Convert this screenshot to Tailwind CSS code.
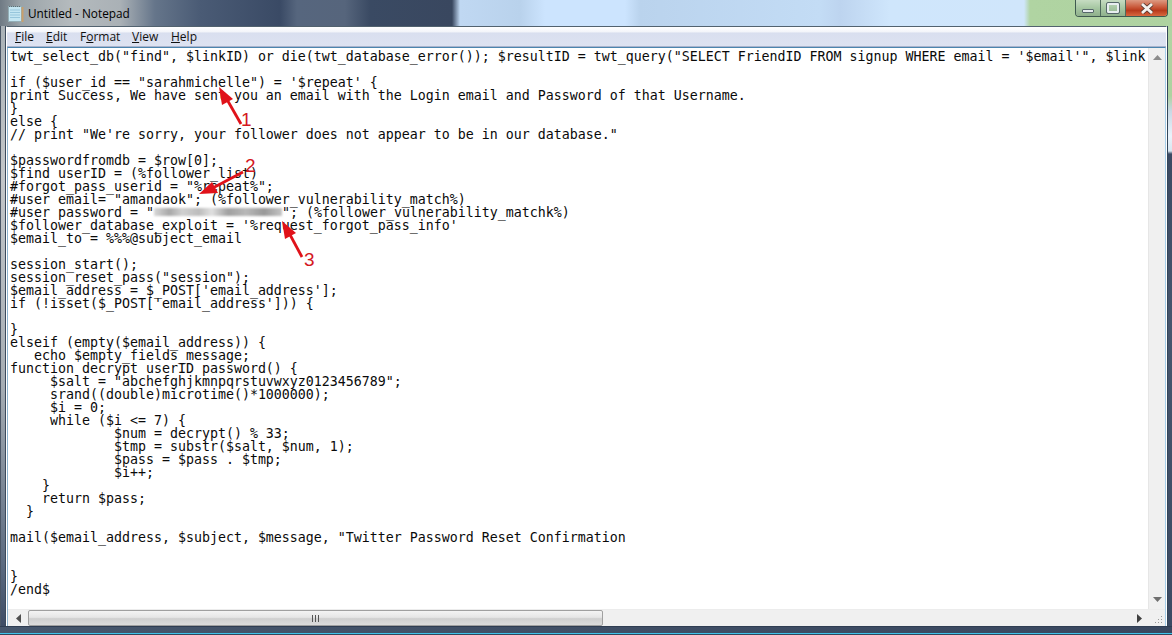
<!DOCTYPE html>
<html>
<head>
<meta charset="utf-8">
<title>Untitled - Notepad</title>
<script src="https://cdn.jsdelivr.net/npm/@tailwindcss/browser@4"></script>
</head>
<body class="m-0 overflow-hidden bg-[#39475f]">
<div class="relative w-[1172px] h-[635px] overflow-hidden flex flex-col font-['Open_Sans',sans-serif]">

  <!-- title bar -->
  <div class="relative h-[26px] shrink-0 flex items-center pl-[8px] bg-[linear-gradient(90deg,#6f7a84_0px,#9aa3a8_20px,#b4babd_70px,#aab1b6_120px,#65758a_155px,#4a5b75_200px,#3a4a65_280px,#56667e_297px,#56657c_345px,#3a4a63_370px,#39475f_452px,#c0d8f2_460px,#b9d2ec_520px,#cce4fe_545px,#cce4fe_625px,#bad3ed_640px,#c3dcf5_820px,#bdd4ef_840px,#cfe6fc_890px,#d0e6fb_1024px,#b0d4a2_1030px,#aed2a0_1172px)]">
    <svg width="16" height="17" viewBox="0 0 16 17" class="shrink-0 mt-[1px]">
      <rect x="0.5" y="1.5" width="13" height="15" fill="#c4e6f2" stroke="#93aeb6"/>
      <rect x="13.5" y="2" width="2" height="15" fill="#c9a06c"/>
      <path d="M1 1.5h12" stroke="#5d6d73" stroke-dasharray="1 1"/>
      <path d="M2 5h10M2 7.5h10M2 10h10M2 12.5h10" stroke="#97c6dc"/>
    </svg>
    <span class="ml-[4px] text-[11.8px] leading-[16px] text-black">Untitled - Notepad</span>

    <!-- caption buttons -->
    <div class="absolute left-[1075px] top-0 w-[93px] h-[17px] flex border border-t-0 border-[#3f5a50] rounded-b-[4px] overflow-hidden">
      <div class="w-[25px] flex items-center justify-center border-r border-[#4f6a5c] bg-[linear-gradient(180deg,#c6dcc2,#a6c7a2_50%,#8fb08c)]">
        <div class="w-[12px] h-[4px] mt-[5px] bg-[#e8eef0] border border-[#56686a] rounded-[1px]"></div>
      </div>
      <div class="w-[25px] flex items-center justify-center border-r border-[#4f6a5c] bg-[linear-gradient(180deg,#c6dcc2,#a6c7a2_50%,#8fb08c)]">
        <div class="w-[12px] h-[10px] border-2 border-[#e8eef0] outline outline-1 outline-[#56686a] rounded-[1px]"></div>
      </div>
      <div class="flex-1 flex items-center justify-center bg-[linear-gradient(180deg,#dd9a82,#c9583a_45%,#b83a1c_65%,#d8683f)]">
        <svg width="14" height="11" viewBox="0 0 14 11"><path d="M2 1l10 9M12 1L2 10" stroke="#5a3a30" stroke-width="4.4"/><path d="M2 1l10 9M12 1L2 10" stroke="#f4f1ee" stroke-width="2.8"/></svg>
      </div>
    </div>
  </div>

  <!-- middle -->
  <div class="flex-1 min-h-0 flex">
    <div class="w-[6px] shrink-0 border-l border-[#4a5666] border-r border-r-[#3c4a5c] bg-[linear-gradient(180deg,#a9b1b6,#c2c6c9_25%,#a5adb4_60%,#5a6a80_90%,#3e4d66)]"></div>

    <div class="flex-1 min-w-0 flex flex-col bg-white border-t border-t-[#52626f] border-l border-l-white border-r border-r-white">
      <!-- menu -->
      <div class="h-[20px] shrink-0 flex items-center pl-[8px] text-[12px] text-[#111] border-b border-[#a9b3cc] bg-[linear-gradient(180deg,#ffffff,#f3f5fa_25%,#d9dfef_32%,#dde2f1)]">
        <span class="w-[31px]"><u>F</u>ile</span>
        <span class="w-[34px]"><u>E</u>dit</span>
        <span class="w-[52px]">F<u>o</u>rmat</span>
        <span class="w-[39px]"><u>V</u>iew</span>
        <span><u>H</u>elp</span>
      </div>

      <!-- editor -->
      <div class="flex-1 min-h-0 flex flex-col border-t border-t-[#4b84ae] border-r border-r-[#a9d0ea] border-l border-l-[#8fb4cf]">
        <div class="flex-1 min-h-0 flex">
          <pre class="flex-1 min-w-0 overflow-hidden m-0 pl-[2px] pt-[2px] font-['DejaVu_Sans_Mono',monospace] text-[13.29px] leading-[13px] text-[#0a0a0a] whitespace-pre">twt_select_db("find", $linkID) or die(twt_database_error()); $resultID = twt_query("SELECT FriendID FROM signup WHERE email = '$email'", $link

if ($user_id == "sarahmichelle") = '$repeat' {
print Success, We have sent you an email with the Login email and Password of that Username.
}
else {
// print "We're sorry, your follower does not appear to be in our database."

$passwordfromdb = $row[0];
$find userID = (%follower_list)
#forgot_pass_userid = "%repeat%";
#user email= "amandaok"; (%follower_vulnerability_match%)
#user password = "<span class="inline-block w-[128px] h-[8px] align-[1px] blur-[1.2px] bg-[linear-gradient(90deg,#d8d8d8,#a8a8a8_12%,#d0d0d0_22%,#bcbcbc_35%,#e0e0e0_45%,#a0a0a0_58%,#b8b8b8_72%,#989898_86%,#c4c4c4)]"></span>"; (%follower_vulnerability_matchk%)
$follower_database_exploit = '%request_forgot_pass_info'
$email_to = %%%@subject_email

session_start();
session_reset_pass("session");
$email_address = $_POST['email_address'];
if (!isset($_POST['email_address'])) {

}
elseif (empty($email_address)) {
   echo $empty_fields_message;
function decrypt userID password() {
     $salt = "abchefghjkmnpqrstuvwxyz0123456789";
     srand((double)microtime()*1000000);
     $i = 0;
     while ($i &lt;= 7) {
             $num = decrypt() % 33;
             $tmp = substr($salt, $num, 1);
             $pass = $pass . $tmp;
             $i++;
    }
    return $pass;
  }

mail($email_address, $subject, $message, "Twitter Password Reset Confirmation


}
/end$</pre>
          <!-- vertical scrollbar -->
          <div class="w-[17px] shrink-0 flex flex-col justify-between items-center py-[7px] bg-[#f0f0f0] border-l border-[#e6e6e6]">
            <svg width="9" height="5" viewBox="0 0 9 5"><path d="M4.5 0L9 5H0z" fill="#8c8c8c"/></svg>
            <svg width="9" height="5" viewBox="0 0 9 5"><path d="M0 0h9L4.5 5z" fill="#6f6f6f"/></svg>
          </div>
        </div>

        <!-- horizontal scrollbar -->
        <div class="h-[17px] shrink-0 flex bg-[#f0f0f0] border-t border-t-[#ececec]">
          <div class="w-[20px] shrink-0 flex items-center justify-center">
            <svg width="5" height="9" viewBox="0 0 5 9"><path d="M5 0v9L0 4.5z" fill="#505050"/></svg>
          </div>
          <div class="w-[575px] shrink-0 flex items-center justify-center border border-[#a0a0a0] rounded-[2px] bg-[linear-gradient(180deg,#f4f4f4,#e6e6e6_45%,#cfcfcf_55%,#dcdcdc)]">
            <svg width="8" height="7" viewBox="0 0 8 7"><path d="M.5 0v7M3.5 0v7M6.5 0v7" stroke="#555"/></svg>
          </div>
          <div class="flex-1 min-w-0"></div>
          <div class="w-[17px] shrink-0 flex items-center justify-center">
            <svg width="5" height="9" viewBox="0 0 5 9"><path d="M0 0v9l5-4.5z" fill="#404040"/></svg>
          </div>
          <div class="w-[17px] shrink-0 flex items-end justify-end p-[2px] bg-[#f0f0f0]">
            <svg width="9" height="9" viewBox="0 0 9 9"><path d="M7 1h1v1H7zM4 4h1v1H4zM7 4h1v1H7zM1 7h1v1H1zM4 7h1v1H4zM7 7h1v1H7z" fill="#9a9a9a"/></svg>
          </div>
        </div>
      </div>
    </div>

    <div class="w-[5px] shrink-0 border-l border-[#33465a] bg-[linear-gradient(180deg,#b0d4a2_0px,#aed2a0_70px,#c8d8e4_85px,#eaf3fb_110px,#d8e6f0_125px,#3b4a63_128px,#46566e_300px,#3b4a63)]"></div>
  </div>

  <!-- bottom frame -->
  <div class="h-[9px] shrink-0 flex flex-col bg-[linear-gradient(90deg,#46566c,#39475f)]">
    <div class="h-px bg-[#2f3d52]"></div>
    <div class="h-[6px]"></div>
    <div class="h-px bg-[#3fc3ea]"></div>
    <div class="h-px bg-[#33475a]"></div>
  </div>

  <!-- annotation arrows -->
  <svg class="absolute inset-0 pointer-events-none" width="1172" height="635" viewBox="0 0 1172 635">
    <g stroke="#e0121a" stroke-width="2.8" fill="#e0121a">
      <path d="M241 124L225 96"/>
      <path d="M219 87L233 99L222 105z" stroke="none"/>
      <path d="M243 172L209 190"/>
      <path d="M199 194L212 182L218 193z" stroke="none"/>
      <path d="M302 257L288 231"/>
      <path d="M282 221L296 233L285 239z" stroke="none"/>
    </g>
  </svg>
  <span class="absolute left-[241px] top-[110px] text-[19px] leading-[20px] font-medium text-[#d4181e] font-['Liberation_Sans',sans-serif]">1</span>
  <span class="absolute left-[245px] top-[156px] text-[19px] leading-[20px] font-medium text-[#d4181e] font-['Liberation_Sans',sans-serif]">2</span>
  <span class="absolute left-[304px] top-[250px] text-[19px] leading-[20px] font-medium text-[#d4181e] font-['Liberation_Sans',sans-serif]">3</span>
</div>
</body>
</html>
